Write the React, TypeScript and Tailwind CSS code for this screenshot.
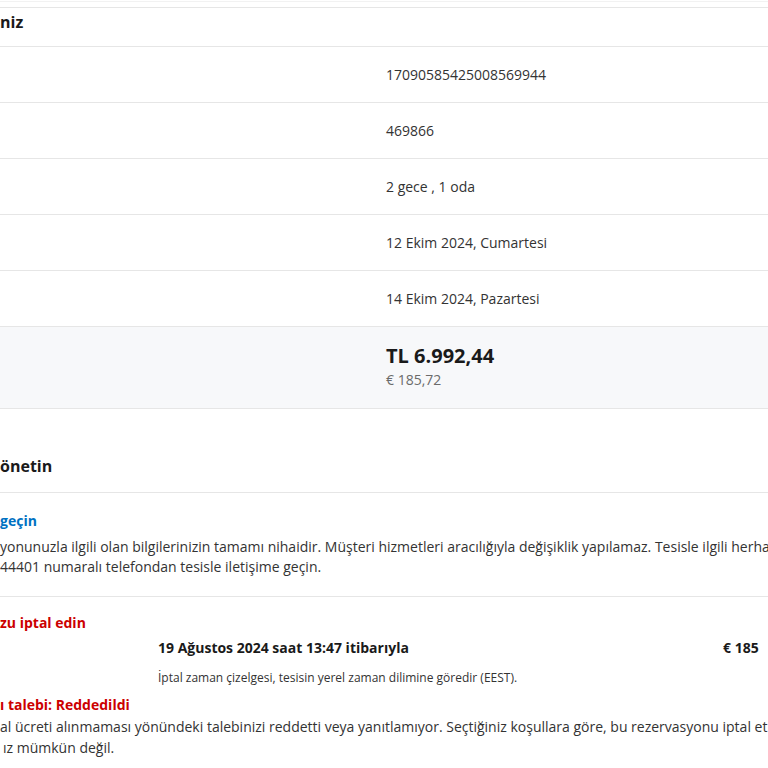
export default function App() {
  const rows = [
    "17090585425008569944",
    "469866",
    "2 gece , 1 oda",
    "12 Ekim 2024, Cumartesi",
    "14 Ekim 2024, Pazartesi",
  ];

  return (
    <div className="w-[768px] h-[768px] overflow-hidden bg-white text-[#333] font-['Open_Sans','Noto_Sans',sans-serif] text-[14px]">
      <div className="mt-px border-t border-[#f2f2f2] pt-[5px]">
        <div className="border-t border-[#e6e6e6]">
          <div className="border-b border-[#e6e6e6] pt-[2px] pb-[12px]">
            <h2 className="text-base font-bold leading-6 text-[#1a1a1a] whitespace-nowrap">niz</h2>
          </div>
          {rows.map((r) => (
            <div key={r} className="flex h-[56px] items-center border-b border-[#e6e6e6]">
              <div className="w-[386px] shrink-0" />
              <span className="leading-5 whitespace-nowrap">{r}</span>
            </div>
          ))}
          <div className="flex border-b border-[#e6e6e6] bg-[#f7f8fa] pt-[15px] pb-[18px]">
            <div className="w-[386px] shrink-0" />
            <div>
              <div className="text-[20px] font-bold leading-7 text-[#1a1a1a]">TL 6.992,44</div>
              <div className="leading-5 text-[#6b6b6b]">€ 185,72</div>
            </div>
          </div>
        </div>
      </div>

      <div className="mt-[45px]">
        <div className="border-b border-[#e6e6e6] pb-[14px]">
          <h2 className="text-base font-bold leading-6 text-[#1a1a1a] whitespace-nowrap">önetin</h2>
        </div>

        <div className="border-b border-[#e6e6e6] pt-[18px] pb-[19px]">
          <div className="font-bold leading-5 text-[#0071c2]">geçin</div>
          <div className="mt-[6px] leading-5 whitespace-nowrap">
            <div>yonunuzla ilgili olan bilgilerinizin tamamı nihaidir. Müşteri hizmetleri aracılığıyla değişiklik yapılamaz. Tesisle ilgili herhangi</div>
            <div>44401 numaralı telefondan tesisle iletişime geçin.</div>
          </div>
        </div>

        <div className="pt-[16px]">
          <div className="font-bold leading-5 text-[#cc0000] whitespace-nowrap">zu iptal edin</div>
          <div className="mt-[5px] flex leading-5">
            <div className="w-[158px] shrink-0" />
            <div className="w-[565px] shrink-0 font-bold text-[#1a1a1a] whitespace-nowrap">19 Ağustos 2024 saat 13:47 itibarıyla</div>
            <div className="font-bold text-[#1a1a1a] whitespace-nowrap">€ 185</div>
          </div>
          <div className="mt-[12px] flex text-[12px] leading-4">
            <div className="w-[158px] shrink-0" />
            <div className="whitespace-nowrap">İptal zaman çizelgesi, tesisin yerel zaman dilimine göredir (EEST).</div>
          </div>
          <div className="mt-[9px] font-bold leading-5 text-[#cc0000] whitespace-nowrap">ı talebi: Reddedildi</div>
          <div className="mt-px leading-[21px] whitespace-nowrap">
            <div>al ücreti alınmaması yönündeki talebinizi reddetti veya yanıtlamıyor. Seçtiğiniz koşullara göre, bu rezervasyonu iptal etmeniz</div>
            <div className="pl-[3px]">ız mümkün değil.</div>
          </div>
        </div>
      </div>
    </div>
  );
}
